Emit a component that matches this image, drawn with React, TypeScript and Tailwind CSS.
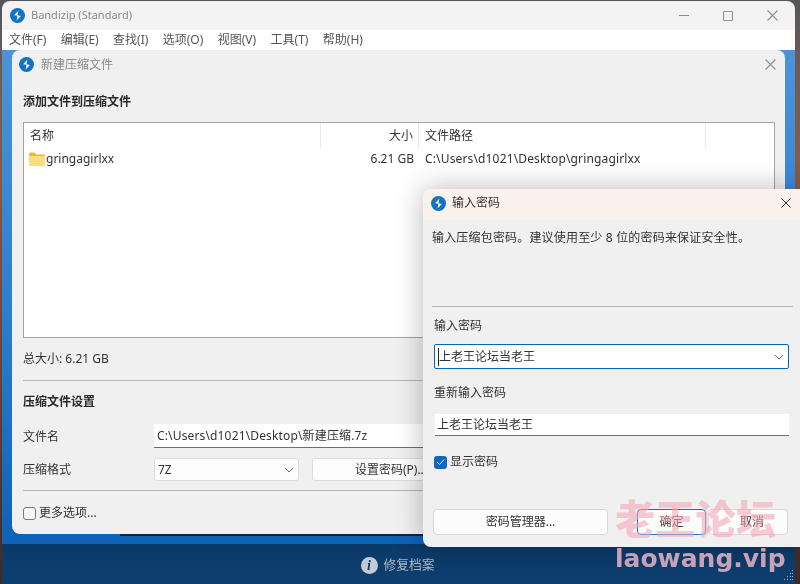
import React from 'react';

const LogoIcon: React.FC = () => (
  <svg width="15" height="15" viewBox="0 0 16 16" className="shrink-0">
    <circle cx="8" cy="8" r="8" fill="#1272c4" />
    <path d="M9 2.6 L4.4 7.6 L8 8.2 L7 13.4 L11.6 8.4 L8 7.8 Z" fill="#fff" />
  </svg>
);

const CloseIcon: React.FC<{ color?: string; size?: number }> = ({ color = '#8f8f8f', size = 11 }) => (
  <svg width={size} height={size} viewBox="0 0 11 11" className="shrink-0">
    <path d="M0.5 0.5 L10.5 10.5 M10.5 0.5 L0.5 10.5" stroke={color} strokeWidth="1.1" />
  </svg>
);

const Chevron: React.FC = () => (
  <svg width="10" height="6" viewBox="0 0 10 6" className="shrink-0">
    <path d="M1 1 L5 5 L9 1" fill="none" stroke="#6b6b6b" strokeWidth="1" />
  </svg>
);

const menus = ['文件(F)', '编辑(E)', '查找(I)', '选项(O)', '视图(V)', '工具(T)', '帮助(H)'];

const ArchiveDialog: React.FC = () => (
  <div className="absolute left-[10px] top-[49px] h-[484px] w-[773px] rounded-lg bg-[#f0f0f0] pl-[11px] pr-[11px]">
    <div className="-ml-[4px] -mr-[2px] flex h-[29px] items-center justify-between">
      <div className="flex items-center gap-[7px]">
        <LogoIcon />
        <span className="text-[12px] text-[#8a8a8a]">新建压缩文件</span>
      </div>
      <CloseIcon />
    </div>
    <div className="mt-[14px] text-[12px] font-bold leading-[18px] text-[#2a2a2a]">添加文件到压缩文件</div>
    <div className="mt-[11px] h-[216px] w-[752px] border border-[#a3a3a3] bg-white text-[12px] text-[#333]">
      <div className="grid h-[25px] grid-cols-[297px_98px_287px_1fr] items-center">
        <span className="flex h-full items-center border-r border-[#e8e8e8] pl-[6px]">名称</span>
        <span className="flex h-full items-center justify-end border-r border-[#e8e8e8] pr-[5px]">大小</span>
        <span className="flex h-full items-center border-r border-[#e8e8e8] pl-[6px]">文件路径</span>
        <span />
      </div>
      <div className="grid h-[21px] grid-cols-[297px_98px_287px_1fr] items-center">
        <span className="flex items-center gap-[1px] pl-[5px]">
          <svg width="16" height="14" viewBox="0 0 16 14" className="shrink-0">
            <path d="M0 2 Q0 0.5 1.5 0.5 H5.5 L7.5 2.5 H16 V13 Q16 13.5 15 13.5 H1 Q0 13.5 0 13 Z" fill="#e9b93f" />
            <path d="M0 4 H16 V13 Q16 13.5 15 13.5 H1 Q0 13.5 0 13 Z" fill="#fbdd7c" />
          </svg>
          gringagirlxx
        </span>
        <span className="pr-[5px] text-right">6.21 GB</span>
        <span className="pl-[6px] tracking-[0.15px]">C:\Users\d1021\Desktop\gringagirlxx</span>
        <span />
      </div>
    </div>
    <div className="mt-[12px] text-[12px] leading-[18px] text-[#333]">总大小: 6.21 GB</div>
    <div className="mt-[12px] h-px bg-[#b5b5b5]" />
    <div className="mt-[12px] text-[12px] font-bold leading-[18px] text-[#2a2a2a]">压缩文件设置</div>
    <div className="mt-[13px] flex h-[24px] items-center text-[12px] text-[#333]">
      <span className="w-[131px] pt-[1px]">文件名</span>
      <div className="flex h-[24px] flex-1 items-center border-b border-[#6f6f6f] bg-white pl-[3px] tracking-[0.15px]">C:\Users\d1021\Desktop\新建压缩.7z</div>
    </div>
    <div className="mt-[10px] flex h-[23px] items-center text-[12px] text-[#333]">
      <span className="w-[131px]">压缩格式</span>
      <div className="flex h-[23px] w-[145px] items-center justify-between rounded-[3px] border border-[#dcdcdc] bg-[#fdfdfd] pl-[3px] pr-[4px]">
        7Z
        <Chevron />
      </div>
      <div className="ml-[13px] flex h-[23px] w-[158px] items-center justify-center rounded-[3px] border border-[#dcdcdc] bg-[#fdfdfd]">设置密码(P)...</div>
    </div>
    <div className="mt-[9px] h-px bg-[#b5b5b5]" />
    <div className="mt-[15px] flex items-center gap-[3px] text-[12px] leading-[14px] text-[#333]">
      <span className="h-[13px] w-[13px] rounded-[3px] border border-[#7a7a7a] bg-[#f6f6f6]" />
      更多选项...
    </div>
  </div>
);

const PasswordDialog: React.FC = () => (
  <div className="absolute left-[423px] top-[189px] h-[358px] w-[377px] rounded-l-lg bg-[#f0f0f0] shadow-[0_0_28px_rgba(0,0,0,0.28)]">
    <div className="flex h-[31px] items-center justify-between rounded-tl-lg bg-[#fbf1ed] pb-[3px] pl-[8px] pr-[9px]">
      <div className="flex items-center gap-[6px]">
        <LogoIcon />
        <span className="text-[12px] text-[#333]">输入密码</span>
      </div>
      <CloseIcon color="#333" size={10} />
    </div>
    <div className="pl-[9px] pr-[7px]">
      <div className="mt-[9px] text-[12px] leading-[18px] tracking-[0.18px] text-[#333]">输入压缩包密码。建议使用至少 8 位的密码来保证安全性。</div>
      <div className="mt-[59px] h-px bg-[#b5b5b5]" />
      <div className="ml-[2px] mt-[10px] text-[12px] leading-[18px] text-[#333]">输入密码</div>
      <div className="ml-[2px] mt-[9px] flex h-[25px] w-[355px] items-center justify-between rounded-[2px] border border-[#0067c0] bg-white pl-[3px] pr-[4px] text-[12px] text-[#333]">
        <span className="border-l border-[#222]">上老王论坛当老王</span>
        <Chevron />
      </div>
      <div className="ml-[2px] mt-[15px] text-[12px] leading-[18px] text-[#333]">重新输入密码</div>
      <div className="ml-[3px] mt-[12px] flex h-[22px] w-[354px] items-center border-b border-[#6f6f6f] bg-white pl-[2px] text-[12px] text-[#333]">上老王论坛当老王</div>
      <div className="ml-[2px] mt-[19px] flex items-center gap-[3px] text-[12px] leading-[14px] text-[#333]">
        <span className="flex h-[13px] w-[13px] items-center justify-center rounded-[3px] bg-[#0f68bd]">
          <svg width="9" height="8" viewBox="0 0 9 8">
            <path d="M1 4 L3.5 6.5 L8 1.5" fill="none" stroke="#dbe9f6" strokeWidth="1" />
          </svg>
        </span>
        显示密码
      </div>
      <div className="mt-[40px] flex h-[26px] text-[12px] text-[#333]">
        <div className="ml-[1px] flex w-[175px] items-center justify-center rounded-[4px] border border-[#d8d8d8] bg-[#fcfcfc]">密码管理器...</div>
        <div className="ml-[29px] flex w-[69px] items-center justify-center rounded-[4px] border border-[#1273c4] bg-[#fcfcfc]">确定</div>
        <div className="ml-[2px] flex w-[80px] items-center justify-center rounded-[4px] border border-[#d8d8d8] bg-[#fcfcfc] pl-[8px]">取消</div>
      </div>
    </div>
  </div>
);

const App: React.FC = () => {
  return (
    <div className="relative h-[584px] w-[800px] overflow-hidden bg-[linear-gradient(180deg,#55555a_0%,#6f5d58_12%,#8a5a45_30%,#6e4636_60%,#3e2a24_100%)] pl-[2px] pr-[5px] pt-[1px] font-['Noto_Sans','Noto_Sans_CJK_SC',sans-serif] text-[#333] blur-[0.3px]">
      <div className="relative flex h-[583px] flex-col overflow-hidden rounded-t-lg">
        <div className="flex h-[29px] items-center justify-between bg-[#f3f3f3] pl-[8px] pr-[17px]">
          <div className="flex items-center gap-[6px]">
            <LogoIcon />
            <span className="text-[11px] text-[#8a8a8a]">Bandizip (Standard)</span>
          </div>
          <div className="flex items-center gap-[34px]">
            <span className="h-px w-[10px] bg-[#8f8f8f]" />
            <span className="h-[10px] w-[10px] rounded-[1px] border border-[#8f8f8f]" />
            <CloseIcon />
          </div>
        </div>
        <div className="flex h-[20px] items-center gap-[14.4px] bg-white pl-[7px] text-[12px] text-[#555]">
          {menus.map(m => (
            <span key={m}>{m}</span>
          ))}
        </div>
        <div className="h-[494px] bg-[linear-gradient(180deg,#4c93da_0%,#2f7fd0_50%,#0d62b8_100%)]" />
        <div className="flex flex-1 items-center justify-center gap-[6px] bg-[linear-gradient(180deg,#0b3a68_0%,#0e3f70_100%)] pr-[2px] pt-[2px]">
          <span className="flex h-[17px] w-[17px] items-center justify-center rounded-full bg-[#c3ccd4] font-['Liberation_Serif',serif] text-[14px] font-bold italic text-[#123f6b]">i</span>
          <span className="text-[12.75px] text-[#a9b8c6]">修复档案</span>
        </div>
        <svg width="10" height="10" viewBox="0 0 10 10" className="absolute bottom-[4px] right-[1px]">
          <g fill="#9fb2c4">
            <rect x="8" y="0" width="1" height="1" />
            <rect x="6" y="3" width="1" height="1" />
            <rect x="8" y="3" width="1" height="1" />
            <rect x="3" y="6" width="1" height="1" />
            <rect x="6" y="6" width="1" height="1" />
            <rect x="8" y="6" width="1" height="1" />
            <rect x="0" y="9" width="1" height="1" />
            <rect x="3" y="9" width="1" height="1" />
            <rect x="6" y="9" width="1" height="1" />
            <rect x="8" y="9" width="1" height="1" />
          </g>
        </svg>
        {/* dark sliver of the window behind, peeking out under the dialog */}
        <div className="absolute left-[118px] right-[12px] top-[533px] h-[2px] bg-[#0a2540]" />
        <ArchiveDialog />
      </div>
      <PasswordDialog />
      {/* forum watermark stamped over the picture */}
      <div className="pointer-events-none absolute left-[615px] top-[494px] flex flex-col items-start">
        <span className="text-[40px] font-black leading-[50px] tracking-[0.3px] text-[#f4a6b6]/60">老王论坛</span>
        <span className="font-['DejaVu_Sans',sans-serif] text-[25px] font-bold leading-[30px] text-[#eab4c8]/85">laowang.vip</span>
      </div>
    </div>
  );
};

export default App;
